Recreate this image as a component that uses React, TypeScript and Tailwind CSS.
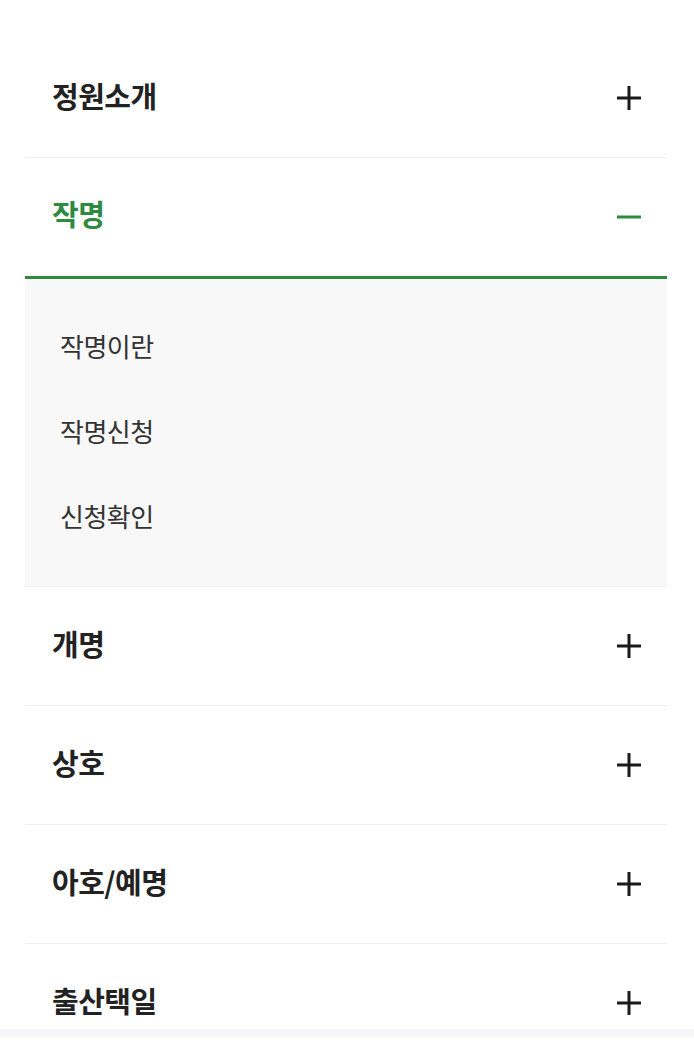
import React from "react";

const font = { fontFamily: '"Noto Sans CJK KR", "Noto Sans", sans-serif' };

function Plus() {
  return (
    <svg width="24" height="24" viewBox="0 0 24 24" className="shrink-0">
      <path d="M12 0V24M0 12H24" stroke="#1a1a1a" strokeWidth="3" />
    </svg>
  );
}

function Minus() {
  return (
    <svg width="24" height="24" viewBox="0 0 24 24" className="shrink-0">
      <path d="M0 12H24" stroke="#2e8a3e" strokeWidth="3" />
    </svg>
  );
}

function Row({ label }: { label: string }) {
  return (
    <li className="h-[119px] flex items-center justify-between pl-[27px] pr-[26px] border-b border-[#eeeeee]">
      <span className="text-[29px] font-bold text-[#222222] leading-none pb-[5px] tracking-[-0.5px]">{label}</span>
      <Plus />
    </li>
  );
}

export default function App() {
  const subs = ["작명이란", "작명신청", "신청확인"];
  return (
    <div className="w-full h-[1052px] bg-white flex flex-col overflow-hidden" style={font}>
      <div className="flex-1 overflow-hidden pt-[39px]">
        <ul className="ml-[25px] mr-[27px]">
          <Row label="정원소개" />
          <li>
            <div className="h-[121px] flex items-center justify-between pl-[27px] pr-[26px] border-b-[3px] border-[#2e8a3e]">
              <span className="text-[29px] font-bold text-[#2e8a3e] leading-none pb-[8px] tracking-[-0.5px]">작명</span>
              <Minus />
            </div>
            <ul className="bg-[#f8f8f8] pt-[24px] pb-[28px] border-b border-[#eeeeee]">
              {subs.map((s) => (
                <li key={s} className="h-[85px] flex items-center pl-[35px]">
                  <span className="text-[26px] text-[#333333] leading-none tracking-[-0.5px]">{s}</span>
                </li>
              ))}
            </ul>
          </li>
          <Row label="개명" />
          <Row label="상호" />
          <Row label="아호/예명" />
          <Row label="출산택일" />
        </ul>
      </div>
      <div className="h-[8px] bg-[#f7f7f9] shrink-0" />
      <div className="h-[15px] bg-white shrink-0" />
    </div>
  );
}
